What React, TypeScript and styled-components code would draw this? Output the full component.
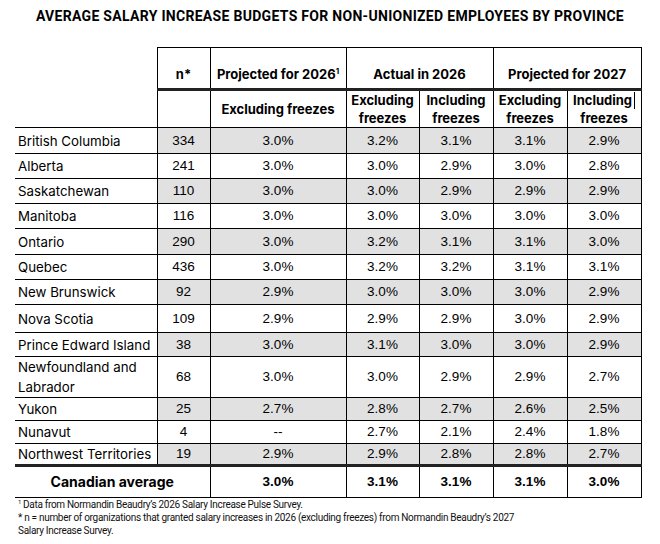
import React from "react";
import styled, { createGlobalStyle } from "styled-components";

const Global = createGlobalStyle`
  html, body { margin: 0; padding: 0; background: #fff; }
  body { font-family: Inter, "Noto Sans", sans-serif; color: #000; }
`;

const Page = styled.div`
  width: 660px;
  height: 544px;
  box-sizing: border-box;
  padding-top: 8px;
  background: #fff;
`;

const Title = styled.h1`
  margin: 0 0 23px 0;
  text-align: center;
  font-family: Roboto, "Liberation Sans", sans-serif;
  font-weight: 700;
  font-size: 14px;
  line-height: 16px;
  letter-spacing: 0.3px;
`;

const Table = styled.table`
  margin-left: 15px;
  width: 626px;
  border-collapse: collapse;
  table-layout: fixed;
`;

const HeadCell = styled.th<{ $noBorder?: boolean; $thick?: boolean; $align?: string }>`
  font-family: Inter, "Noto Sans", sans-serif;
  font-weight: 700;
  font-size: 13px;
  line-height: 18px;
  text-align: center;
  padding: 0;
  vertical-align: ${(p) => p.$align || "middle"};
  border: ${(p) => (p.$noBorder ? "none" : "1px solid #000")};
  border-bottom: ${(p) => (p.$thick ? "3px solid #222" : p.$noBorder ? "none" : "1px solid #000")};
`;

const Head1 = styled.tr`
  height: 42px;
  th { padding-bottom: 5px; }
`;

const Head2 = styled.tr`
  height: 38px;
`;

const Sup = styled.sup`
  font-size: 8px;
  line-height: 0;
  vertical-align: 5px;
`;

const Caret = styled.span`
  display: inline-block;
  width: 1px;
  height: 17px;
  background: #000;
  margin-left: 2px;
  vertical-align: -4px;
`;

const Row = styled.tr``;

const Province = styled.td`
  font-family: Inter, "Noto Sans", sans-serif;
  font-size: 13.3px;
  line-height: 20px;
  padding: 0 0 0 3px;
  text-align: left;
  border-top: 1px solid #000;
  border-bottom: 1px solid #000;
  border-right: 1px solid #000;
  background: #fff;
`;

const NCell = styled.td<{ $shade: boolean }>`
  font-family: "Liberation Sans", Arial, sans-serif;
  font-size: 13.5px;
  line-height: 18px;
  text-align: center;
  padding: 0;
  border: 1px solid #000;
  background: ${(p) => (p.$shade ? "#e1e1e1" : "#fff")};
`;

const AvgRow = styled.tr`
  height: 32px;
  td { border-top: 3px solid #222; border-bottom: 1px solid #000; }
`;

const AvgLabel = styled.td`
  font-family: Inter, "Noto Sans", sans-serif;
  font-weight: 700;
  font-size: 14px;
  text-align: center;
  padding: 0 0 1px 0;
  border-right: 1px solid #000;
`;

const AvgCell = styled.td`
  font-family: "Liberation Sans", Arial, sans-serif;
  font-weight: 700;
  font-size: 13.5px;
  text-align: center;
  padding: 0 0 1px 0;
  border-left: 1px solid #000;
  border-right: 1px solid #000;
`;

const Notes = styled.div`
  margin: 0 0 0 18px;
  font-family: Roboto, "Liberation Sans", sans-serif;
  font-size: 10px;
  letter-spacing: -0.3px;
  line-height: 13px;
  color: #111;
`;

const NoteSup = styled.sup`
  font-size: 6px;
  vertical-align: 4px;
  line-height: 0;
  margin-right: 2px;
`;

type R = { name: string; n: string; v: string[]; h: number };

const rows: R[] = [
  { name: "British Columbia", n: "334", v: ["3.0%", "3.2%", "3.1%", "3.1%", "2.9%"], h: 26 },
  { name: "Alberta", n: "241", v: ["3.0%", "3.0%", "2.9%", "3.0%", "2.8%"], h: 25 },
  { name: "Saskatchewan", n: "110", v: ["3.0%", "3.0%", "2.9%", "2.9%", "2.9%"], h: 25 },
  { name: "Manitoba", n: "116", v: ["3.0%", "3.0%", "3.0%", "3.0%", "3.0%"], h: 25 },
  { name: "Ontario", n: "290", v: ["3.0%", "3.2%", "3.1%", "3.1%", "3.0%"], h: 26 },
  { name: "Quebec", n: "436", v: ["3.0%", "3.2%", "3.2%", "3.1%", "3.1%"], h: 25 },
  { name: "New Brunswick", n: "92", v: ["2.9%", "3.0%", "3.0%", "3.0%", "2.9%"], h: 25 },
  { name: "Nova Scotia", n: "109", v: ["2.9%", "2.9%", "2.9%", "3.0%", "2.9%"], h: 28 },
  { name: "Prince Edward Island", n: "38", v: ["3.0%", "3.1%", "3.0%", "3.0%", "2.9%"], h: 24 },
  { name: "Newfoundland and Labrador", n: "68", v: ["3.0%", "3.0%", "2.9%", "2.9%", "2.7%"], h: 39 },
  { name: "Yukon", n: "25", v: ["2.7%", "2.8%", "2.7%", "2.6%", "2.5%"], h: 23 },
  { name: "Nunavut", n: "4", v: ["--", "2.7%", "2.1%", "2.4%", "1.8%"], h: 23 },
  { name: "Northwest Territories", n: "19", v: ["2.9%", "2.9%", "2.8%", "2.8%", "2.7%"], h: 22 },
];

export default function App() {
  return (
    <Page>
      <Global />
      <Title>AVERAGE SALARY INCREASE BUDGETS FOR NON-UNIONIZED EMPLOYEES BY PROVINCE</Title>
      <Table>
        <colgroup>
          <col style={{ width: 142 }} />
          <col style={{ width: 53 }} />
          <col style={{ width: 136 }} />
          <col style={{ width: 73 }} />
          <col style={{ width: 74 }} />
          <col style={{ width: 74 }} />
          <col style={{ width: 74 }} />
        </colgroup>
        <thead>
          <Head1>
            <HeadCell $noBorder />
            <HeadCell $thick $align="bottom">n*</HeadCell>
            <HeadCell $thick $align="bottom">
              Projected for 2026<Sup>1</Sup>
            </HeadCell>
            <HeadCell $thick $align="bottom" colSpan={2}>Actual in 2026</HeadCell>
            <HeadCell $thick $align="bottom" colSpan={2}>Projected for 2027</HeadCell>
          </Head1>
          <Head2>
            <HeadCell $noBorder />
            <HeadCell />
            <HeadCell>Excluding freezes</HeadCell>
            <HeadCell $align="top">Excluding<br />freezes</HeadCell>
            <HeadCell $align="top">Including<br />freezes</HeadCell>
            <HeadCell $align="top">Excluding<br />freezes</HeadCell>
            <HeadCell $align="top">Including<Caret /><br />freezes</HeadCell>
          </Head2>
        </thead>
        <tbody>
          {rows.map((r, i) => (
            <Row key={r.name} style={{ height: r.h }}>
              <Province>{r.name === "Newfoundland and Labrador" ? <>Newfoundland and<br />Labrador</> : r.name}</Province>
              <NCell $shade={i % 2 === 0}>{r.n}</NCell>
              {r.v.map((v, j) => (
                <NCell key={j} $shade={i % 2 === 0}>{v}</NCell>
              ))}
            </Row>
          ))}
          <AvgRow>
            <AvgLabel colSpan={2}>Canadian average</AvgLabel>
            <AvgCell>3.0%</AvgCell>
            <AvgCell>3.1%</AvgCell>
            <AvgCell>3.1%</AvgCell>
            <AvgCell>3.1%</AvgCell>
            <AvgCell>3.0%</AvgCell>
          </AvgRow>
        </tbody>
      </Table>
      <Notes>
        <div><NoteSup>1</NoteSup>Data from Normandin Beaudry’s 2026 Salary Increase Pulse Survey.</div>
        <div>* n = number of organizations that granted salary increases in 2026 (excluding freezes) from Normandin Beaudry’s 2027<br />Salary Increase Survey.</div>
      </Notes>
    </Page>
  );
}
